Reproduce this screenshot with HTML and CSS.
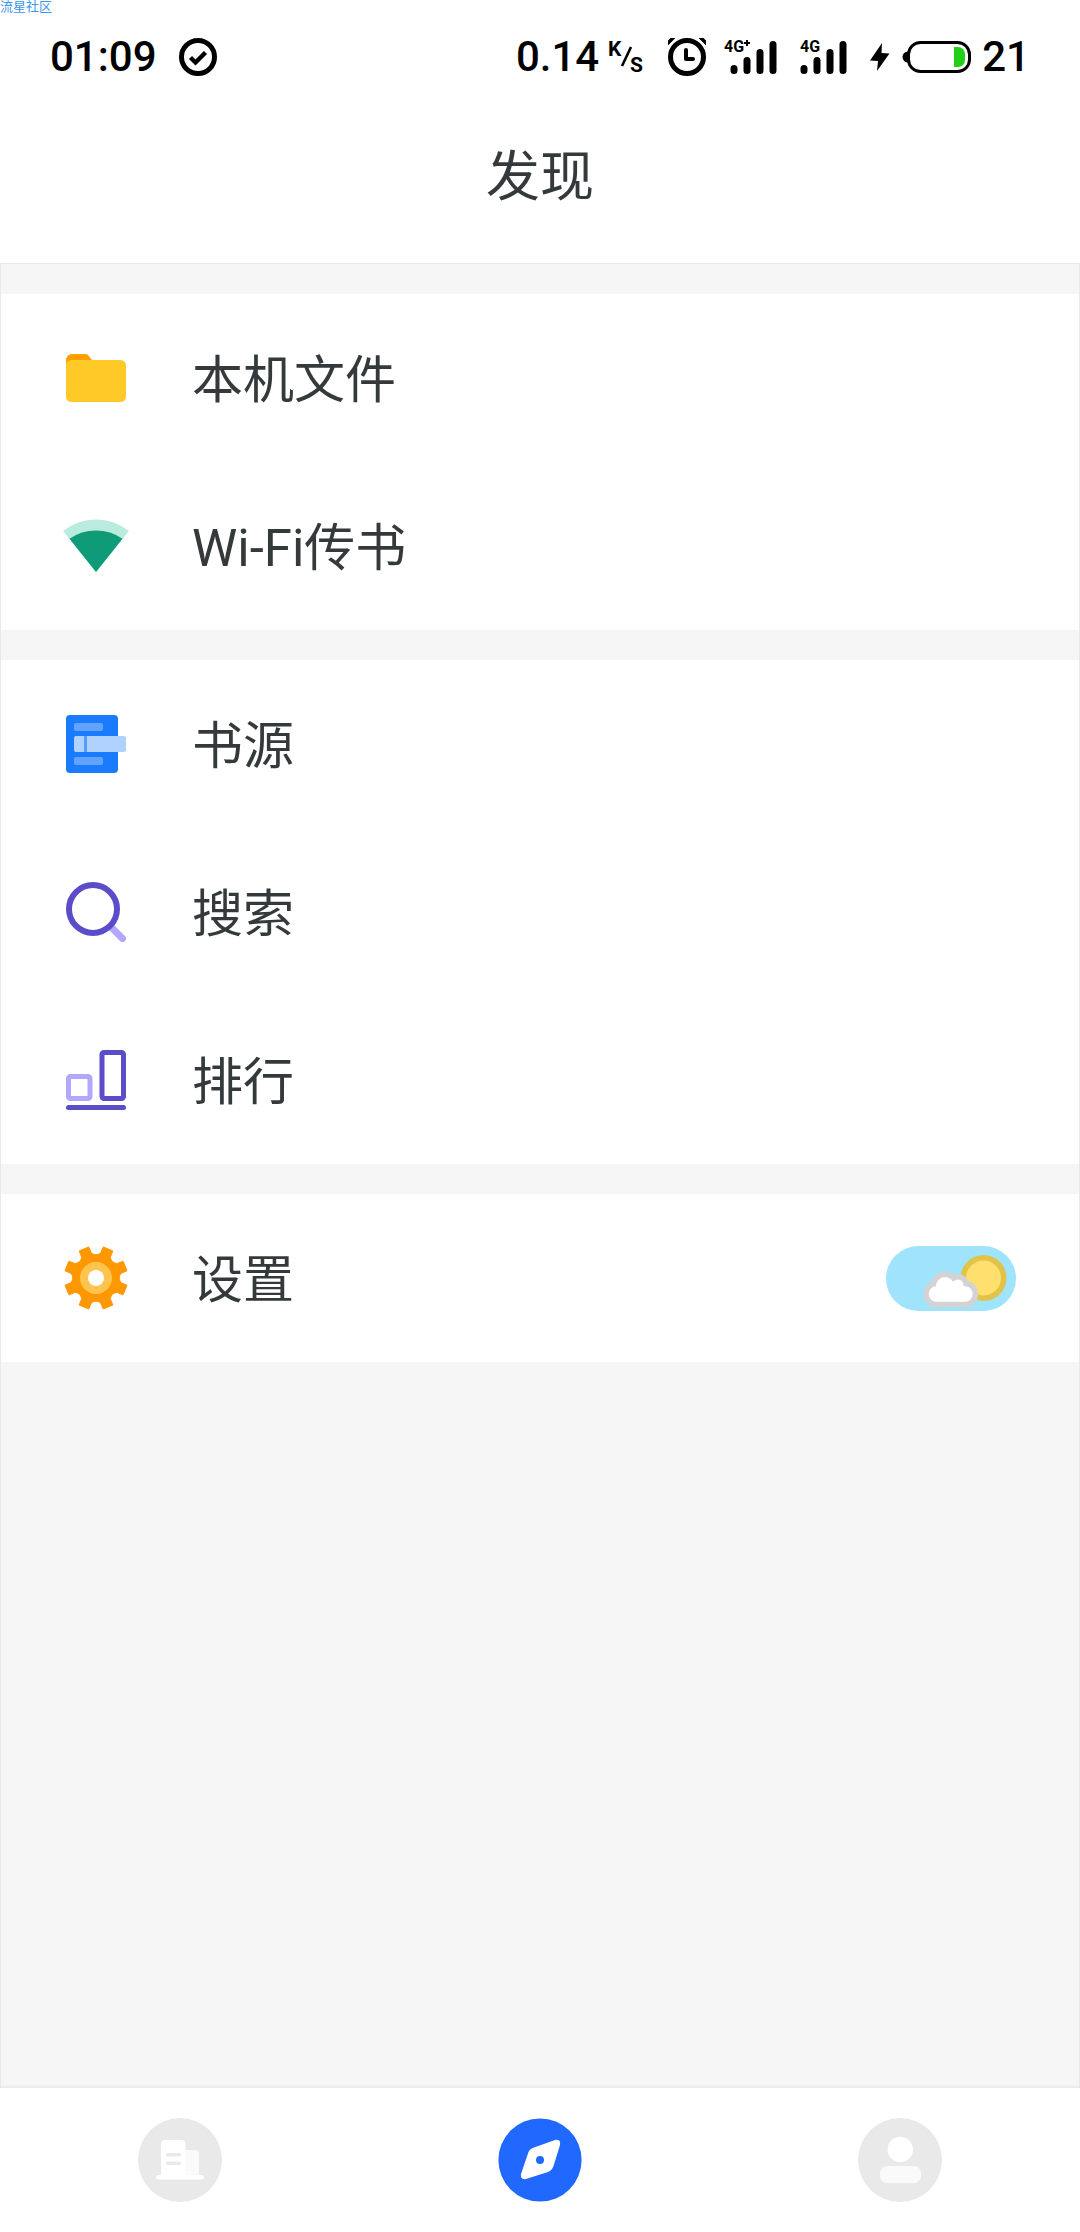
FILE: index.html
```html
<!DOCTYPE html>
<html lang="zh-CN">
<head>
<meta charset="utf-8">
<meta name="viewport" content="width=device-width, initial-scale=1">
<title>发现</title>
<link rel="stylesheet" href="styles.css">
</head>
<body>
<div class="app">
  <span class="watermark">流星社区</span>
  <div class="status">
    <span class="status-text">01:09</span>
    <svg class="icon-check" width="38" height="38" viewBox="0 0 38 38"><circle cx="19" cy="19" r="16.5" fill="none" stroke="#000" stroke-width="5"/><path d="M11.5 19.5l5 5 10-10" fill="none" stroke="#000" stroke-width="4.4"/></svg>
    <span class="status-text rate">0.14</span>
    <svg class="icon-unit" width="36" height="38" viewBox="0 0 36 38"><text x="0" y="18" class="unit">K</text><path d="M14 28L23 9" stroke="#000" stroke-width="2.6"/><text x="22" y="34" class="unit">S</text></svg>
    <svg class="icon-alarm" width="38" height="38" viewBox="0 0 38 38"><circle cx="19" cy="19" r="16.5" fill="none" stroke="#000" stroke-width="5"/><path d="M18 12v9h7" fill="none" stroke="#000" stroke-width="4" stroke-linecap="round" stroke-linejoin="round"/><path d="M-1 6L6-1M39 6L32-1" stroke="#000" stroke-width="3.4"/></svg>
    <svg class="icon-signal" width="54" height="36" viewBox="0 0 54 36"><text x="0" y="13" class="network">4G</text><path d="M20 4h6M23 1v6" stroke="#000" stroke-width="2"/><path d="M10 29.500v2M23 21.500v10M36 13.500v18M49 5.500v26" stroke="#000" stroke-width="7" stroke-linecap="round"/></svg>
    <svg class="icon-signal" width="48" height="36" viewBox="0 0 48 36"><text x="0" y="13" class="network">4G</text><path d="M4 29.500v2M17 21.500v10M30 13.500v18M43 5.500v26" stroke="#000" stroke-width="7" stroke-linecap="round"/></svg>
    <svg class="icon-bolt" width="20" height="28" viewBox="0 0 20 28"><path d="M12 0L0 17.500l8 .5L7 28 19.500 10.500 11.500 10z"/></svg>
    <svg class="icon-battery" width="68" height="32" viewBox="0 0 68 32"><path d="M5 10.500a5.500 5.500 0 0 0 0 11z"/><rect x="5.500" y="1.500" width="61" height="29" rx="12" fill="#fff" stroke="#000" stroke-width="3"/><path d="M51 6h4a7 7 0 0 1 7 7v6a7 7 0 0 1-7 7h-4z" fill="#21d116"/></svg>
    <span class="status-text">21</span>
  </div>
  <header class="header"><h1 class="title">发现</h1></header>

  <main class="content">
    <section class="group">
      <a class="row" href="#files">
        <svg class="row-icon" viewBox="0 0 64 64"><path d="M2 22v-8a6 6 0 0 1 6-6h13q2 0 3 1l7 9v4z" fill="#ff9f00"/><rect x="2" y="14" width="60" height="42" rx="5.500" fill="#ffca28"/></svg>
        <span class="row-label">本机文件</span>
      </a>
      <a class="row" href="#wifi">
        <svg class="row-icon" viewBox="0 0 64 64"><path d="M32 58L-1 17a53 53 0 0 1 66 0z" fill="#b9ecdf"/><path d="M32 58L5.500 24.700a47 47 0 0 1 53 0z" fill="#109b78"/></svg>
        <span class="row-label">Wi-Fi传书</span>
      </a>
    </section>
    <section class="group">
      <a class="row" href="#sources">
        <svg class="row-icon" viewBox="0 0 64 64"><rect x="2" y="3" width="52" height="58" rx="4" fill="#1b7bff"/><rect x="10" y="11" width="29" height="8" rx="2" fill="#62a3ff"/><rect x="10" y="45" width="29" height="8" rx="2" fill="#62a3ff"/><rect x="10" y="24" width="52" height="16" rx="2" fill="#b0d2ff"/><path d="M20 24h3v16h-3z" fill="#569cff"/></svg>
        <span class="row-label">书源</span>
      </a>
      <a class="row" href="#search">
        <svg class="row-icon" viewBox="0 0 64 64"><path d="M47 47L58.500 58.500" stroke="#b1a7ff" stroke-width="7" stroke-linecap="round"/><circle cx="29" cy="29" r="24" fill="#fff" stroke="#5b4cc9" stroke-width="6"/></svg>
        <span class="row-label">搜索</span>
      </a>
      <a class="row" href="#ranking">
        <svg class="row-icon" viewBox="0 0 64 64" fill="none" stroke="#5b4cc9" stroke-width="5"><rect x="4.500" y="28.500" width="21.500" height="22" rx="2" stroke="#b1a7ff"/><rect x="38" y="4.500" width="21.500" height="46" rx="2"/><path d="M4.500 59.500h55" stroke-linecap="round"/></svg>
        <span class="row-label">排行</span>
      </a>
    </section>
    <section class="group">
      <div class="row">
        <svg class="row-icon" viewBox="-32 -32 64 64"><path d="M-7.300-31L-4.800-25.500C-3-22.600 3-22.600 4.800-25.500L7.300-31 16.800-27.100 14.600-21.400C13.900-18.100 18.100-13.900 21.400-14.600L27.100-16.800 31-7.300 25.500-4.800C22.600-3 22.600 3 25.500 4.800L31 7.300 27.100 16.800 21.400 14.600C18.100 13.900 13.900 18.100 14.600 21.400L16.800 27.100 7.300 31 4.800 25.500C3 22.600-3 22.600-4.800 25.500L-7.300 31-16.800 27.100-14.600 21.400C-13.900 18.100-18.100 13.900-21.400 14.600L-27.100 16.800-31 7.300-25.500 4.800C-22.600 3-22.600-3-25.500-4.800L-31-7.300-27.100-16.800-21.400-14.600C-18.100-13.900-13.900-18.100-14.600-21.400L-16.800-27.100z" fill="#ff9800" stroke="#ff9800" stroke-linejoin="round"/><circle r="16" fill="#ffc34f"/><circle r="8" fill="#fff"/></svg>
        <a class="row-label row-link" href="#settings">设置</a>
        <label class="theme">
          <input class="theme-input" type="checkbox" aria-label="日间模式" checked>
          <svg class="theme-art" viewBox="0 0 130 65"><circle cx="97.500" cy="32" r="20.250" fill="#ffdf6e" stroke="#e1c348" stroke-width="5.500"/><g fill="#d3d3d3" stroke="#d3d3d3" stroke-width="11"><circle cx="50.500" cy="48" r="7.700"/><circle cx="59" cy="40" r="9"/><circle cx="72" cy="39" r="5.500"/><circle cx="79" cy="48" r="7.700"/><path d="M50.500 44h28.500v11.700h-28.500z"/></g><g fill="#fff"><circle cx="50.500" cy="48" r="7.700"/><circle cx="59" cy="40" r="9"/><circle cx="72" cy="39" r="5.500"/><circle cx="79" cy="48" r="7.700"/><path d="M50.500 40L60 35.500h12L79 41v14.700h-28.500z"/></g></svg>
        </label>
      </div>
    </section>
  </main>

  <nav class="tabs">
    <a class="tab" href="#shelf" aria-label="书架"><svg class="tab-icon" viewBox="0 0 84 84"><circle cx="42" cy="42" r="42" fill="#e9e9e9"/><path d="M45 32h12a4 4 0 0 1 4 4v22h-16z" fill="#fafafa"/><path d="M23 58V26a4 4 0 0 1 4-4h16.500a4 4 0 0 1 4 4v32z" fill="#fff"/><rect x="18" y="57" width="48" height="4.500" rx="2" fill="#fff"/><path d="M29.500 36.800h12M29.500 45.200h12" stroke="#e9e9e9" stroke-width="3.400" stroke-linecap="round"/></svg></a>
    <a class="tab" href="#discover" aria-label="发现" aria-current="page"><svg class="tab-icon" viewBox="0 0 84 84"><circle cx="42" cy="42" r="41.600" fill="#2168ff"/><path d="M36 29.500L57 22Q63 21 62 27L55.500 48Q54 52.500 50 54L28 61Q22 62 23 56L30.500 34Q32 30.500 36 29.500z" fill="#fff"/><circle cx="42" cy="42" r="4" fill="#2168ff"/></svg></a>
    <a class="tab" href="#me" aria-label="我的"><svg class="tab-icon" viewBox="0 0 84 84"><circle cx="42" cy="42" r="42" fill="#e9e9e9"/><circle cx="42.300" cy="31.500" r="12.700" fill="#fff"/><rect x="22" y="48" width="41" height="17" rx="7" fill="#fafafa"/></svg></a>
  </nav>
</div>
</body>
</html>
```
FILE: styles.css
```css
* {
  box-sizing: border-box;
}

body {
  margin: 0;
  background: #fff;
  color: #343a3b;
  font-family: Roboto, "Noto Sans CJK SC", sans-serif;
}

a {
  color: inherit;
  text-decoration: none;
}

svg {
  display: block;
  flex: none;
  overflow: visible;
}

.app {
  position: relative;
  display: flex;
  flex-direction: column;
  min-height: 100vh;
}

.watermark {
  position: absolute;
  top: 0;
  left: 0;
  color: #3d97ee;
  font-size: 13px;
  line-height: 13px;
}

.status {
  display: flex;
  align-items: center;
  height: 114px;
  padding: 0 50px;
  color: #000;
}

.status-text {
  font-size: 42px;
  font-weight: 500;
  line-height: 48px;
}

.rate {
  margin-left: auto;
}

.icon-check {
  margin-left: 22px;
}

.icon-unit {
  margin-left: 9px;
}

.icon-alarm {
  margin-left: 24px;
  overflow: hidden;
}

.icon-signal {
  margin-left: 18px;
}

.icon-signal + .icon-signal {
  margin-left: 22px;
}

.icon-bolt {
  margin-left: 22px;
}

.icon-battery {
  margin: 0 11px 0 13px;
}

.unit {
  font-size: 21px;
  font-weight: 700;
}

.network {
  font-size: 16px;
  font-weight: 700;
}

.header {
  display: flex;
  justify-content: center;
  height: 149px;
  padding-top: 24px;
}

.title {
  margin: 0;
  font-size: 54px;
  font-weight: 400;
  line-height: 80px;
}

.content {
  display: flex;
  flex: 1;
  flex-direction: column;
  gap: 30px;
  padding-top: 30px;
  border: 1px solid #e9e9e9;
  border-bottom: 0;
  background: #f6f6f6;
}

.group {
  background: #fff;
}

.row {
  display: flex;
  align-items: center;
  gap: 64px;
  height: 168px;
  padding: 0 63px;
  font-size: 51px;
  line-height: 76px;
}

.row-icon {
  width: 64px;
  height: 64px;
}

.row-label {
  padding-top: 5px;
}

.row-link {
  flex: 1;
}

.theme {
  display: grid;
}

.theme-input,
.theme-art {
  grid-area: 1 / 1;
  width: 130px;
  height: 65px;
}

.theme-input {
  margin: 0;
  border-radius: 33px;
  background: #9fe3fd;
  appearance: none;
}

.theme-art {
  pointer-events: none;
}

.tabs {
  display: grid;
  grid-template-columns: repeat(3, 1fr);
  height: 144px;
  background: #fff;
  box-shadow: 0 0 4px rgba(0, 0, 0, 0.12);
}

.tab {
  display: flex;
  align-items: center;
  justify-content: center;
}

.tab-icon {
  width: 84px;
  height: 84px;
}
```
